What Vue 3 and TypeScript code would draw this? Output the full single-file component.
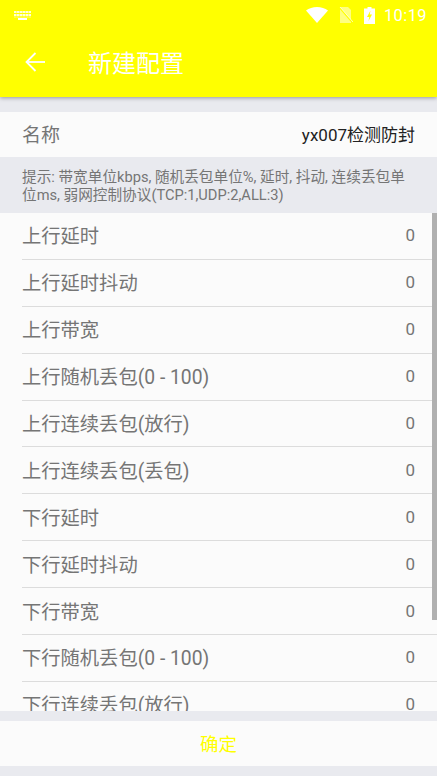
<script setup lang="ts">
const rows: string[] = [
  '上行延时', '上行延时抖动', '上行带宽', '上行随机丢包(0 - 100)', '上行连续丢包(放行)', '上行连续丢包(丢包)',
  '下行延时', '下行延时抖动', '下行带宽', '下行随机丢包(0 - 100)', '下行连续丢包(放行)',
]
</script>

<template>
  <div class="page">
    <header class="appbar">
      <div class="status">
        <svg class="kbd" width="17" height="9" viewBox="0 0 17 9" fill="#fff">
          <rect x="0" y="0" width="17" height="2" opacity=".85" />
          <rect x="0" y="3" width="17" height="2" opacity=".85" />
          <rect x="0" y="5.500" width="17" height="1" opacity=".5" />
          <rect x="4" y="7" width="9" height="2" />
          <g fill="#ff0" opacity=".6">
            <rect x="2" y="0" width=".7" height="6.500" />
            <rect x="5" y="0" width=".7" height="6.500" />
            <rect x="8" y="0" width=".7" height="6.500" />
            <rect x="11" y="0" width=".7" height="6.500" />
            <rect x="14" y="0" width=".7" height="6.500" />
          </g>
        </svg>
        <div class="status-right">
          <svg width="22" height="16" viewBox="0 0 22 16"><path d="M0 3.500C3 1.200 6.800 0 11 0s8 1.200 11 3.500L11 16z" fill="#fff" /></svg>
          <svg class="sim" width="15" height="16" viewBox="0 0 15 16">
            <path d="M2 0h8l3 3v13H2z" fill="#fff" opacity=".5" />
            <path d="M1 0l13 15" stroke="#ff0" stroke-width="1.500" />
            <path d="M2 0l13 15" stroke="#fff" stroke-width="1" opacity=".7" />
          </svg>
          <svg class="batt" width="11" height="17" viewBox="0 0 11 17">
            <path d="M3.500 0h4v1.500H11V17H0V1.500h3.500z" fill="#fff" />
            <path d="M6.500 3.500L3 10h2.300l-.8 4L8 7.500H5.700z" fill="#ff0" />
          </svg>
          <span class="time">10:19</span>
        </div>
      </div>
      <div class="toolbar">
        <svg class="back" width="20" height="20" viewBox="0 0 20 20" fill="none" stroke="#fff" stroke-width="1.800">
          <path d="M20 10H2" />
          <path d="M10.500 1L1.500 10l9 9" />
        </svg>
        <h1 class="title">新建配置</h1>
      </div>
    </header>

    <div class="name-row">
      <span class="name-label">名称</span>
      <span class="name-value">yx007检测防封</span>
    </div>

    <p class="hint">提示: 带宽单位kbps, 随机丢包单位%, 延时, 抖动, 连续丢包单位ms, 弱网控制协议(TCP:1,UDP:2,ALL:3)</p>

    <div class="list">
      <div v-for="row in rows" :key="row" class="row">
        <span class="row-label">{{ row }}</span>
        <span class="row-value">0</span>
      </div>
      <div class="scrollbar"></div>
    </div>

    <div class="confirm">确定</div>
  </div>
</template>

<style>
html, body { margin: 0; background: #e9eaef; }
</style>

<style scoped>
.page {
  width: 437px;
  height: 776px;
  display: flex;
  flex-direction: column;
  overflow: hidden;
  background: #e9eaef;
  font-family: Roboto, "Noto Sans CJK SC", sans-serif;
}
.appbar {
  height: 97px;
  flex: none;
  background: #ffff00;
  box-shadow: 0 1px 4px rgba(0, 0, 0, .35);
  position: relative;
  z-index: 1;
}
.status {
  height: 28px;
  display: flex;
  align-items: center;
  justify-content: space-between;
  padding: 2px 10px 0 14px;
  box-sizing: border-box;
}
.status-right {
  display: flex;
  align-items: center;
}
.sim { margin-left: 10px; }
.batt { margin-left: 11px; }
.time {
  margin-left: 9px;
  color: #fff;
  font-size: 16.500px;
  letter-spacing: .4px;
}
.toolbar {
  height: 69px;
  display: flex;
  align-items: center;
  padding: 0 0 1px 25px;
  box-sizing: border-box;
}
.title {
  margin: 0 0 2px 43px;
  color: #fff;
  font-size: 24px;
  font-weight: 400;
}
.name-row {
  flex: none;
  height: 45px;
  margin-top: 15px;
  padding: 0 22px;
  background: #fbfbfb;
  display: flex;
  align-items: center;
  justify-content: space-between;
}
.name-label {
  color: #757575;
  font-size: 19px;
  position: relative;
  top: -1px;
}
.name-value {
  color: #222;
  font-size: 17px;
  position: relative;
  top: -1px;
}
.hint {
  flex: none;
  height: 56px;
  margin: 0;
  padding: 11px 22px 0;
  box-sizing: border-box;
  color: #757575;
  font-size: 14.650px;
  line-height: 18px;
}
.list {
  flex: none;
  height: 498px;
  overflow: hidden;
  position: relative;
  background: #fbfbfb;
}
.row {
  height: 46.900px;
  margin-left: 22px;
  padding: 0 22px 1px 0;
  box-sizing: border-box;
  border-bottom: 1px solid #dcdcdc;
  display: flex;
  align-items: center;
  justify-content: space-between;
}
.row-label {
  color: #757575;
  font-size: 19.300px;
}
.row-value {
  color: #757575;
  font-size: 17px;
}
.scrollbar {
  position: absolute;
  top: 0;
  right: 0;
  width: 5px;
  height: 407px;
  background: #b0b0b0;
}
.confirm {
  flex: none;
  height: 45px;
  margin-top: 10px;
  background: #fbfbfb;
  color: #ffff00;
  font-size: 18.500px;
  padding-bottom: 2px;
  box-sizing: border-box;
  display: flex;
  align-items: center;
  justify-content: center;
}
</style>
